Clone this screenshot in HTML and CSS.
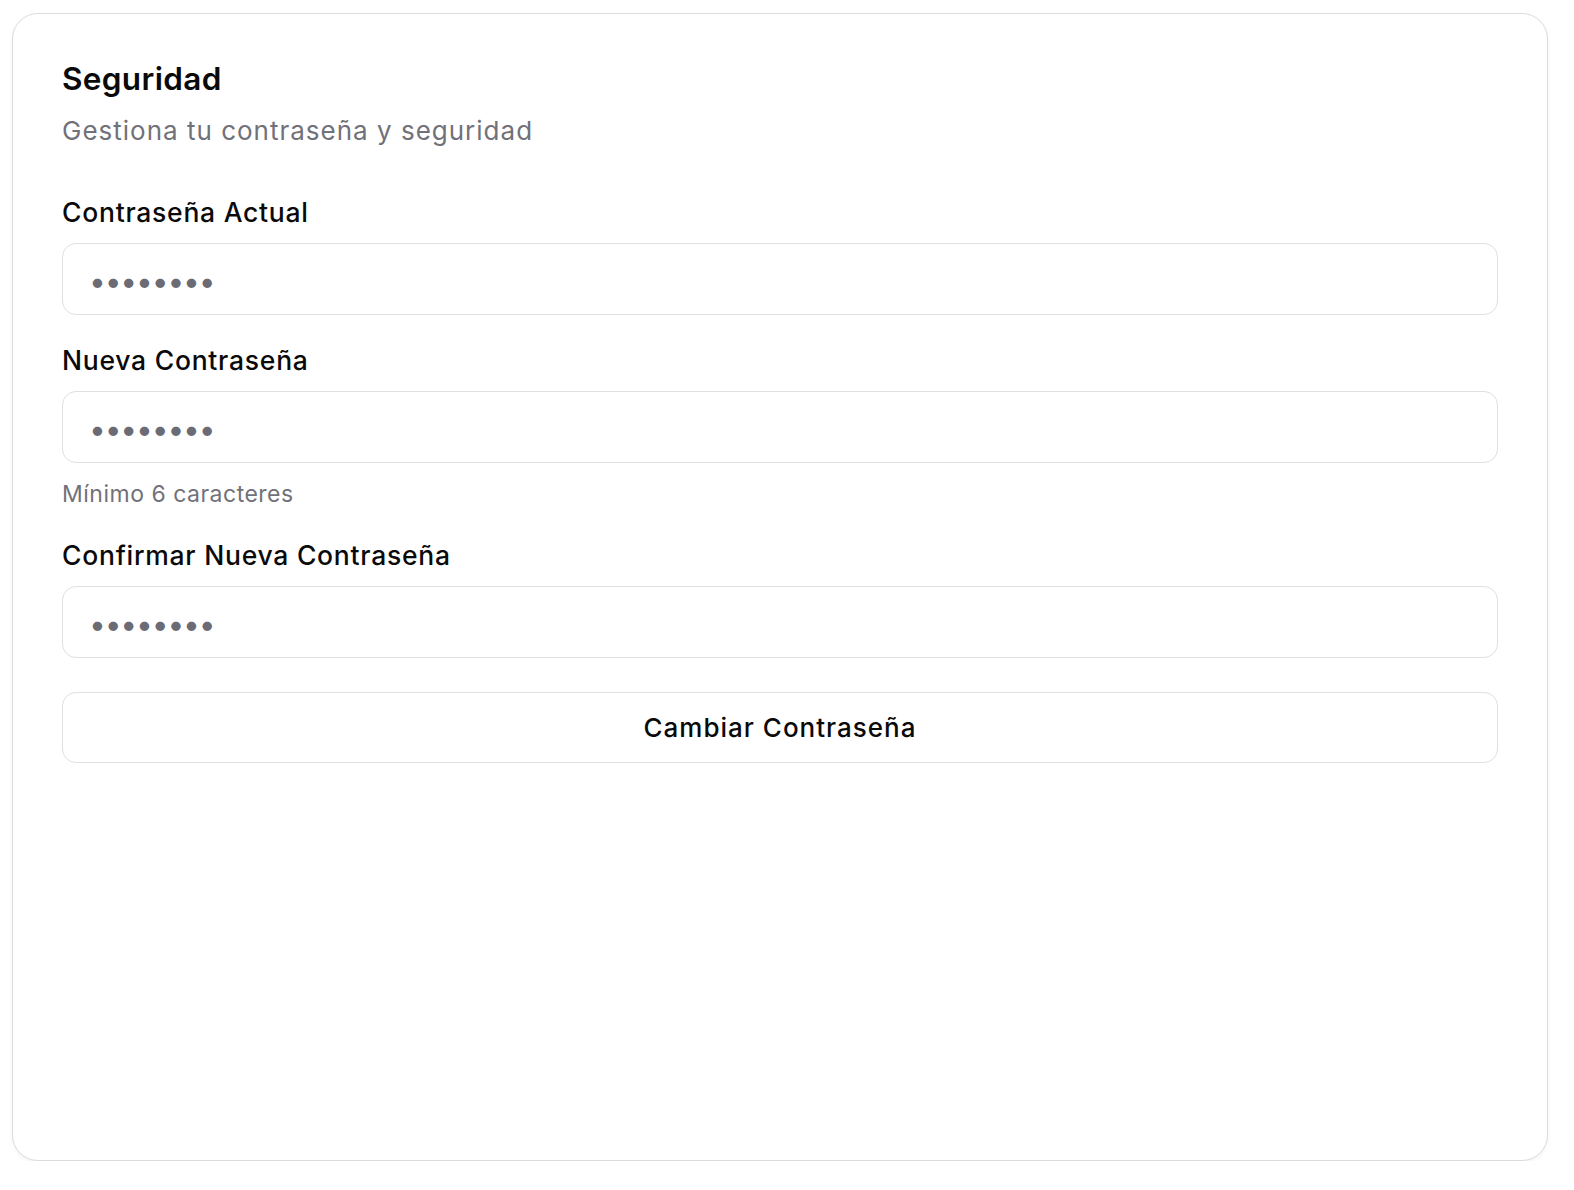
FILE: index.html
```html
<!DOCTYPE html>
<html lang="es">
<head>
<meta charset="utf-8">
<title>Seguridad</title>
<link rel="stylesheet" href="styles.css">
</head>
<body>
<div class="card">
  <div class="card-header">
    <h2 class="title">Seguridad</h2>
    <p class="subtitle">Gestiona tu contraseña y seguridad</p>
  </div>
  <form class="form">
    <div class="field">
      <label class="label" for="cur">Contraseña Actual</label>
      <input class="input" id="cur" type="password" value="12345678">
    </div>
    <div class="field">
      <label class="label" for="new">Nueva Contraseña</label>
      <input class="input" id="new" type="password" value="12345678">
      <p class="hint">Mínimo 6 caracteres</p>
    </div>
    <div class="field">
      <label class="label" for="conf">Confirmar Nueva Contraseña</label>
      <input class="input" id="conf" type="password" value="12345678">
    </div>
    <button class="button" type="button">Cambiar Contraseña</button>
  </form>
</div>
</body>
</html>
```
FILE: styles.css
```css
* { box-sizing: border-box; }
html, body { margin: 0; padding: 0; background: #ffffff; }
body {
  font-family: Inter, "Noto Sans", sans-serif;
  color: #0a0a0a;
  padding-top: 13px;
  padding-left: 12px;
}
.card {
  width: 1536px;
  height: 1148px;
  border: 1.5px solid #dcdcdf;
  border-radius: 26px;
  background: #ffffff;
  box-shadow: 0 2px 4px rgba(0,0,0,0.05);
  padding: 46px 49px 0 49px;
}
.title {
  margin: 0;
  font-size: 31.5px;
  line-height: 38px;
  font-weight: 600;
  letter-spacing: 0.35px;
}
.subtitle {
  margin: 15px 0 0;
  font-size: 26px;
  line-height: 36px;
  letter-spacing: 1px;
  color: #71717a;
}
.form {
  margin-top: 45px;
  display: flex;
  flex-direction: column;
}
.field { display: flex; flex-direction: column; }
.field + .field { margin-top: 27px; }
.label {
  font-size: 26.5px;
  line-height: 36px;
  font-weight: 500;
  letter-spacing: 0.75px;
}
.input {
  margin-top: 13px;
  height: 72px;
  width: 100%;
  border: 1.5px solid #e0e0e3;
  border-radius: 14px;
  background: #ffffff;
  padding: 3px 26px 0;
  font-family: Inter, sans-serif;
  font-size: 30px;
  color: #6b6b75;
  letter-spacing: -1.2px;
  outline: none;
}
.hint {
  margin: 16px 0 1px;
  font-size: 23px;
  line-height: 30px;
  letter-spacing: 0.5px;
  color: #71717a;
}
.button {
  margin-top: 34px;
  height: 71px;
  width: 100%;
  border: 1.5px solid #e0e0e3;
  border-radius: 14px;
  background: #ffffff;
  font-family: Inter, sans-serif;
  font-size: 26px;
  font-weight: 500;
  letter-spacing: 1px;
  color: #0a0a0a;
}
```
